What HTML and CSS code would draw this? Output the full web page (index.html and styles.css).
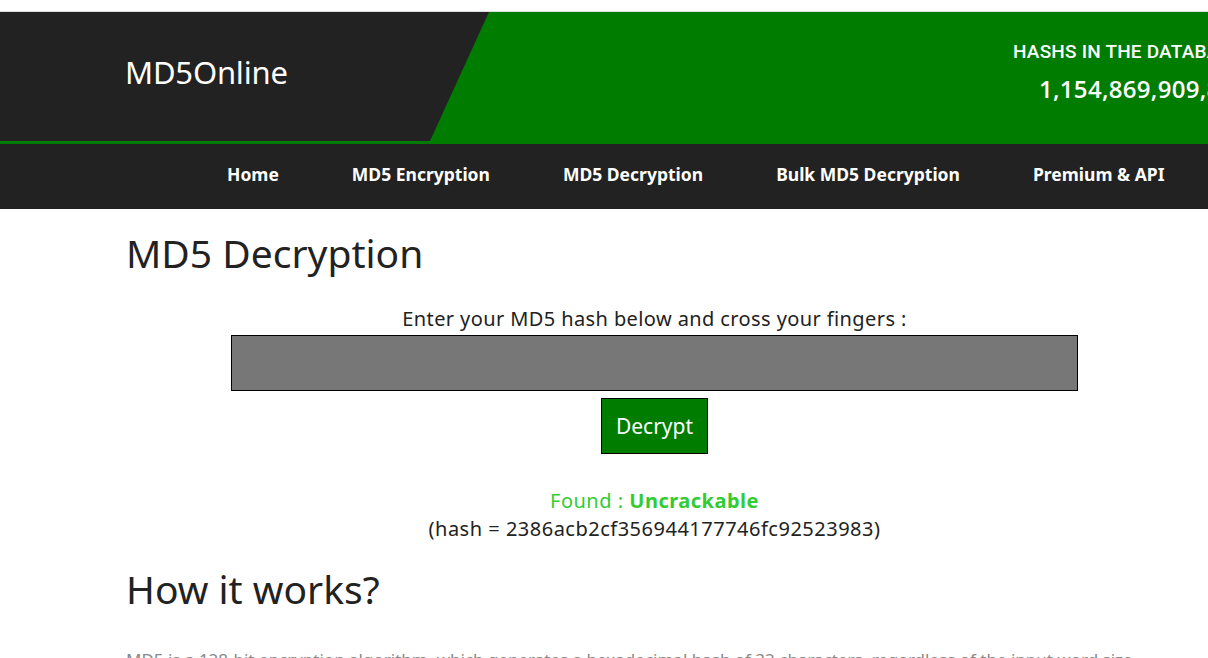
FILE: index.html
```html
<!DOCTYPE html>
<html>
<head>
<meta charset="utf-8">
<link rel="stylesheet" href="styles.css">
</head>
<body>
<div class="page">
  <header class="top">
    <div class="brand">MD5Online</div>
    <div class="green"></div>
    <div class="counter">
      <div class="counter-label">HASHS IN THE DATABASE:</div>
      <div class="counter-value">1,154,869,909,834</div>
    </div>
  </header>
  <nav class="nav">
    <a href="#">Home</a>
    <a href="#">MD5 Encryption</a>
    <a href="#">MD5 Decryption</a>
    <a href="#">Bulk MD5 Decryption</a>
    <a href="#">Premium &amp; API</a>
  </nav>
  <main class="main">
    <h1 class="title">MD5 Decryption</h1>
    <form class="form">
      <label class="prompt">Enter your MD5 hash below and cross your fingers :</label>
      <input class="hash-input" type="text">
      <button class="btn" type="button">Decrypt</button>
    </form>
    <div class="result">
      <div class="found">Found : <b>Uncrackable</b></div>
      <div class="hash">(hash = 2386acb2cf356944177746fc92523983)</div>
    </div>
    <h2 class="title2">How it works?</h2>
    <p class="text">MD5 is a 128-bit encryption algorithm, which generates a hexadecimal hash of 32 characters, regardless of the input word size.</p>
  </main>
</div>
</body>
</html>
```
FILE: styles.css
```css
html, body { margin: 0; padding: 0; }
body {
  background: #fff;
  font-family: "Noto Sans", sans-serif;
  overflow: hidden;
  color: #222;
}
.page { width: 1208px; }
.top {
  position: relative;
  margin-top: 11px;
  border-top: 1px solid #ddd;
  height: 129px;
  background: #222;
  border-bottom: 3px solid #007c00;
  overflow: hidden;
  display: flex;
  align-items: center;
}
.green {
  position: absolute;
  top: 0; bottom: 0; left: 0; right: 0;
  background: #007c00;
  clip-path: polygon(489px 0, 100% 0, 100% 100%, 430px 100%);
}
.brand {
  position: relative;
  z-index: 1;
  margin-left: 125px;
  margin-top: -10px;
  color: #fff;
  font-size: 31px;
  letter-spacing: -0.2px;
}
.counter {
  position: absolute;
  z-index: 1;
  left: 1013px;
  top: 28px;
  color: #fff;
  white-space: nowrap;
}
.counter-label {
  font-family: Roboto, sans-serif;
  font-weight: 500;
  font-size: 19px;
  letter-spacing: 0.2px;
}
.counter-value {
  font-family: "Open Sans", sans-serif;
  margin-top: 9px;
  margin-left: 26px;
  font-size: 24px;
  font-weight: 600;
  letter-spacing: 0.3px;
}
.nav {
  background: #222;
  height: 65px;
  display: flex;
  align-items: center;
  padding-left: 227px;
  padding-bottom: 6px;
  box-sizing: border-box;
  gap: 73px;
}
.nav a {
  color: #fff;
  text-decoration: none;
  font-weight: 700;
  font-size: 17.5px;
  letter-spacing: 0;
}
.main {
  margin-left: 126px;
  width: 1057px;
}
.title {
  margin: 0;
  padding-top: 21px;
  font-weight: 400;
  font-size: 39px;
  line-height: 46px;
  color: #222;
}
.form {
  display: flex;
  flex-direction: column;
  align-items: center;
  margin-top: 30px;
}
.prompt {
  font-size: 20px;
  letter-spacing: 0.4px;
  line-height: 26px;
  color: #222;
}
.hash-input {
  margin-top: 3px;
  width: 847px;
  height: 56px;
  box-sizing: border-box;
  background: #777;
  border: 1px solid #000;
  padding: 0;
}
.btn {
  margin-top: 7px;
  width: 107px;
  height: 56px;
  background: #007c00;
  border: 1px solid #000;
  color: #fff;
  font-family: "Noto Sans", sans-serif;
  font-size: 21px;
  padding: 0;
}
.result {
  text-align: center;
  margin-top: 33px;
  font-size: 20px;
  letter-spacing: 0.5px;
  line-height: 28px;
}
.found { color: #33cc33; }
.found b { font-weight: 700; }
.hash { color: #222; }
.title2 {
  margin: 23px 0 0;
  font-weight: 400;
  font-size: 39px;
  line-height: 46px;
  color: #222;
}
.text {
  margin: 36px 0 0;
  font-size: 17px;
  color: #888;
  white-space: nowrap;
}
```
